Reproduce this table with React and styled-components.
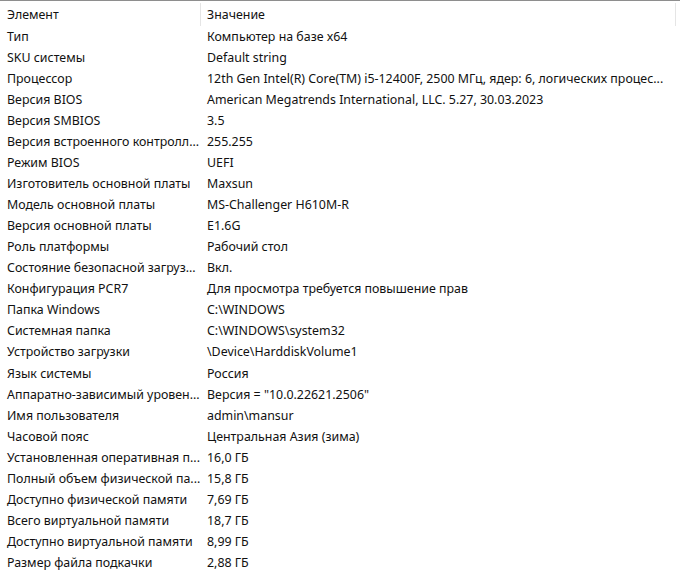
import React from "react";
import styled, { createGlobalStyle } from "styled-components";

const Global = createGlobalStyle`
  html, body { margin: 0; padding: 0; background: #ffffff; }
  body { font-family: "Noto Sans", "Open Sans", sans-serif; }
`;

const rows = [
  ["Тип", "Компьютер на базе x64"],
  ["SKU системы", "Default string"],
  ["Процессор", "12th Gen Intel(R) Core(TM) i5-12400F, 2500 МГц, ядер: 6, логических процес..."],
  ["Версия BIOS", "American Megatrends International, LLC. 5.27, 30.03.2023"],
  ["Версия SMBIOS", "3.5"],
  ["Версия встроенного контролл...", "255.255"],
  ["Режим BIOS", "UEFI"],
  ["Изготовитель основной платы", "Maxsun"],
  ["Модель основной платы", "MS-Challenger H610M-R"],
  ["Версия основной платы", "E1.6G"],
  ["Роль платформы", "Рабочий стол"],
  ["Состояние безопасной загруз...", "Вкл."],
  ["Конфигурация PCR7", "Для просмотра требуется повышение прав"],
  ["Папка Windows", "C:\\WINDOWS"],
  ["Системная папка", "C:\\WINDOWS\\system32"],
  ["Устройство загрузки", "\\Device\\HarddiskVolume1"],
  ["Язык системы", "Россия"],
  ["Аппаратно-зависимый уровен...", "Версия = \"10.0.22621.2506\""],
  ["Имя пользователя", "admin\\mansur"],
  ["Часовой пояс", "Центральная Азия (зима)"],
  ["Установленная оперативная п...", "16,0 ГБ"],
  ["Полный объем физической па...", "15,8 ГБ"],
  ["Доступно физической памяти", "7,69 ГБ"],
  ["Всего виртуальной памяти", "18,7 ГБ"],
  ["Доступно виртуальной памяти", "8,99 ГБ"],
  ["Размер файла подкачки", "2,88 ГБ"],
];

const ListView = styled.div`
  width: 680px;
  height: 575px;
  overflow: hidden;
  border-top: 1px solid #8e8e8e;
  box-sizing: border-box;
  font-size: 12.4px;
  color: #111111;
`;

const Header = styled.div`
  display: grid;
  grid-template-columns: 201px 475px 1fr;
  height: 25px;
`;

const HeaderCell = styled.div`
  display: flex;
  align-items: center;
  padding-left: ${(p) => p.$pad}px;
  border-right: ${(p) => (p.$divider ? "1px solid #e5e5e5" : "none")};
  margin: 2px 0 0;
  white-space: nowrap;
  overflow: hidden;
`;

const Row = styled.div`
  display: grid;
  grid-template-columns: 200px 1fr;
  height: 21.04px;
  align-items: center;
`;

const Cell = styled.div`
  padding-left: 7px;
  white-space: nowrap;
  overflow: hidden;
`;

export default function App() {
  return (
    <>
      <Global />
      <ListView>
        <Header>
          <HeaderCell $pad={7} $divider>Элемент</HeaderCell>
          <HeaderCell $pad={6} $divider>Значение</HeaderCell>
          <HeaderCell $pad={0} />
        </Header>
        {rows.map(([k, v], i) => (
          <Row key={i}>
            <Cell>{k}</Cell>
            <Cell>{v}</Cell>
          </Row>
        ))}
      </ListView>
    </>
  );
}
